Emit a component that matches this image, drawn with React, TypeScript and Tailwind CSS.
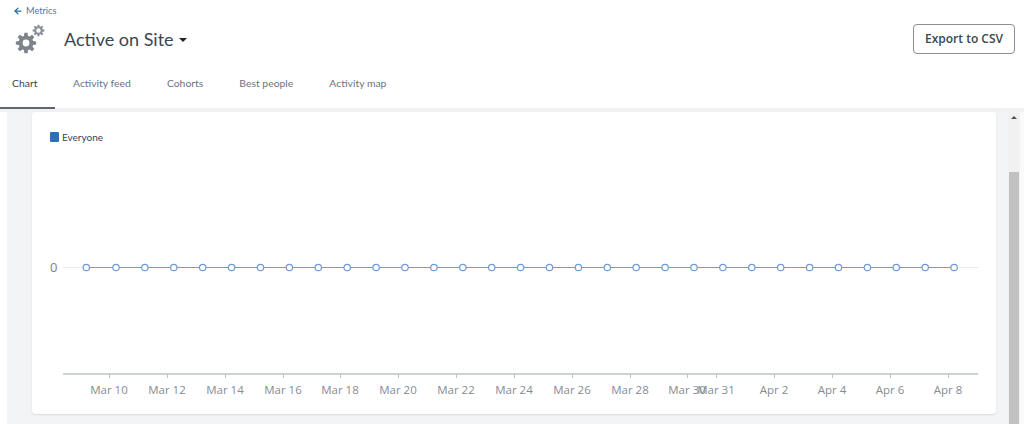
import { ArrowLeft } from "lucide-react";

const tabs = ["Chart", "Activity feed", "Cohorts", "Best people", "Activity map"];

const pointXs = [86.3, ...Array.from({ length: 30 }, (_, i) => 116 + i * 28.9)];

const ticks = [
  ["Mar 10", 109],
  ["Mar 12", 167],
  ["Mar 14", 225],
  ["Mar 16", 283],
  ["Mar 18", 340],
  ["Mar 20", 398],
  ["Mar 22", 456],
  ["Mar 24", 514],
  ["Mar 26", 572],
  ["Mar 28", 630],
  ["Mar 30", 687],
  ["Mar 31", 716],
  ["Apr 2", 774],
  ["Apr 4", 832],
  ["Apr 6", 890],
  ["Apr 8", 948],
] as const;

const gearPath = (cx: number, cy: number, outer: number, inner: number, hole: number, teeth: number) => {
  let d = "";
  const step = (Math.PI * 2) / teeth;
  for (let i = 0; i < teeth; i++) {
    const a = i * step - Math.PI / 2;
    const pts = [
      [inner, a - step * 0.36],
      [outer, a - step * 0.2],
      [outer, a + step * 0.2],
      [inner, a + step * 0.36],
    ];
    pts.forEach(([r, t], j) => {
      d += `${i === 0 && j === 0 ? "M" : "L"}${(cx + r * Math.cos(t)).toFixed(2)} ${(cy + r * Math.sin(t)).toFixed(2)}`;
    });
  }
  d += `Z M${cx - hole} ${cy}a${hole} ${hole} 0 1 0 ${hole * 2} 0a${hole} ${hole} 0 1 0 ${-hole * 2} 0Z`;
  return d;
};

const Gears = () => (
  <svg width="32" height="32" viewBox="0 0 32 32" className="shrink-0">
    <path d={gearPath(12, 20, 10.3, 7.4, 3.4, 8)} fill="#7d848c" fillRule="evenodd" />
    <path d={gearPath(24.5, 7.5, 5.9, 4.2, 2.2, 8)} fill="#8a9098" fillRule="evenodd" />
  </svg>
);

const Chart = () => (
  <svg viewBox="32 112 964 302" className="h-[302px] w-[964px]">
    <line x1="63" x2="978" y1="267.5" y2="267.5" stroke="#e8eaed" />
    <text x="57.5" y="272" textAnchor="end" fontSize="13" fill="#7c8289" fontFamily="'Open Sans', sans-serif">
      0
    </text>
    <line x1="86" x2="954" y1="267.5" y2="267.5" stroke="#6f9bd1" strokeWidth="1.2" />
    {pointXs.map((x) => (
      <circle key={x} cx={x} cy="267.5" r="3.2" fill="#ffffff" stroke="#6f9bd1" strokeWidth="1.2" />
    ))}
    <line x1="63" x2="978" y1="374" y2="374" stroke="#bcc3ca" strokeWidth="1.5" />
    {ticks.map(([label, x]) => (
      <g key={label}>
        <line x1={x + 0.5} x2={x + 0.5} y1="374" y2="378" stroke="#bcc3ca" />
        <text x={x} y="394" textAnchor="middle" fontSize="11.5" fill="#868c93" fontFamily="'Open Sans', sans-serif">
          {label}
        </text>
      </g>
    ))}
  </svg>
);

export default function App() {
  return (
    <div className="flex h-[424px] w-[1024px] flex-col overflow-hidden bg-white font-['Lato',sans-serif]">
      <div className="h-[112px] shrink-0 border-b-[4px] border-[#f0f1f3]">
        <div className="flex items-start justify-between pr-[9px] pt-[5px]">
          <div className="pl-[13px]">
            <div className="flex h-[12px] items-center gap-[3px] text-[9.2px] text-[#3f7bab]">
              <ArrowLeft size={10} strokeWidth={3} color="#1c6aa6" />
              <span>Metrics</span>
            </div>
            <div className="mt-[6px] flex items-center">
              <div className="ml-[1px]">
                <Gears />
              </div>
              <h1 className="ml-[18px] text-[18px] font-normal leading-[28px] text-[#3c4650]">Active on Site</h1>
              <span className="ml-[5px] mt-[2px] h-0 w-0 border-x-[4px] border-t-[4px] border-x-transparent border-t-[#222]" />
            </div>
          </div>
          <button className="mt-[19px] h-[30px] w-[102px] rounded-[4px] border border-[#8a8f96] bg-white font-['Open_Sans',sans-serif] text-[12px] font-semibold text-[#3c4650]">
            Export to CSV
          </button>
        </div>
        <div className="mt-[12px] flex h-[34px] items-start">
          {tabs.map((tab, i) => (
            <div
              key={tab}
              className={
                i === 0
                  ? "h-[42px] w-[55px] border-b-[2px] border-[#5f6771] pl-[12px] pt-[9px] text-[10.4px] text-[#3c4650]"
                  : "ml-[18px] pt-[9px] pr-[18px] text-[10.4px] text-[#6b747e]"
              }
            >
              {tab}
            </div>
          ))}
        </div>
      </div>
      <div className="flex min-h-0 flex-1 pl-[7px]">
        <div className="flex-1 bg-[#f3f4f6] pl-[25px] pr-[12px]">
          <div className="relative h-[302px] w-[964px] rounded-[4px] bg-white shadow-[0_1px_2px_rgba(0,0,0,0.1)]">
            <div className="absolute left-[18px] top-[19px] flex items-center gap-[3px] text-[10px] leading-[12px] text-[#3c4650]">
              <span className="h-[10px] w-[9px] rounded-[1px] bg-[#2f6fb8]" />
              Everyone
            </div>
            <Chart />
          </div>
        </div>
        <div className="flex w-[16px] shrink-0 flex-col bg-[#fafafa] pr-[4px]">
          <div className="flex h-[60px] justify-center bg-[#f1f1f1] pt-[4px]">
            <span className="h-0 w-0 border-x-[3px] border-b-[3px] border-x-transparent border-b-[#505050]" />
          </div>
          <div className="flex-1 bg-[#f1f1f1] px-[1px]">
            <div className="h-full bg-[#c1c1c1]" />
          </div>
        </div>
      </div>
    </div>
  );
}
